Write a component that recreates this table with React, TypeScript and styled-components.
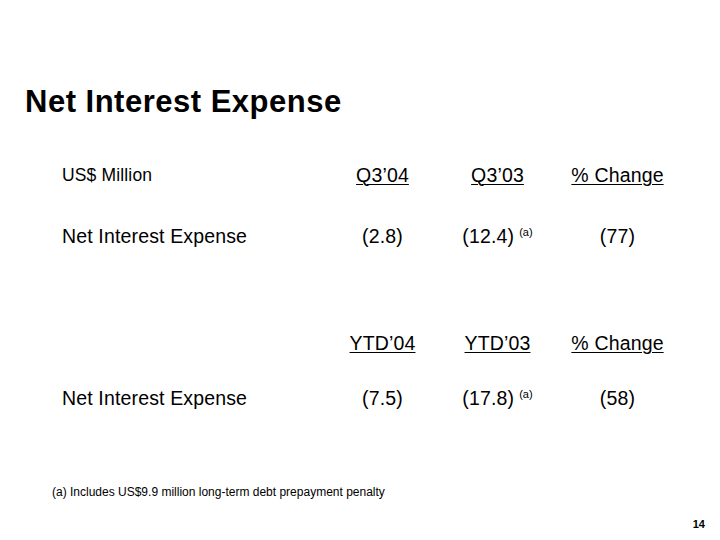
import React from "react";
import styled, { createGlobalStyle } from "styled-components";

const GlobalStyle = createGlobalStyle`
  html, body {
    margin: 0;
    padding: 0;
    background: #ffffff;
  }
  body {
    font-family: "Liberation Sans", Arial, sans-serif;
    color: #000000;
  }
`;

const Slide = styled.div`
  width: 720px;
  height: 540px;
  box-sizing: border-box;
  padding: 84px 0 0 0;
  display: flex;
  flex-direction: column;
  background: #ffffff;
  overflow: hidden;
`;

const Title = styled.h1`
  margin: 0 0 0 25px;
  font-size: 31px;
  line-height: 36px;
  font-weight: bold;
  letter-spacing: 0.5px;
`;

const Table = styled.div`
  margin-top: 35px;
  display: flex;
  flex-direction: column;
  padding-left: 62px;
`;

const Row = styled.div<{ $top: number }>`
  display: grid;
  grid-template-columns: 263px 115px 115px 125px;
  height: 40px;
  align-items: center;
  margin-top: ${(p) => p.$top}px;
  font-size: 19.5px;
  letter-spacing: 0.15px;
`;

const Label = styled.div<{ $small?: boolean }>`
  font-size: ${(p) => (p.$small ? "17.5px" : "19.5px")};
  white-space: nowrap;
`;

const Cell = styled.div`
  text-align: center;
  white-space: nowrap;
`;

const HeadCell = styled(Cell)`
  span {
    text-decoration: underline;
    text-underline-offset: 2px;
    text-decoration-thickness: 1px;
  }
`;

const Note = styled.sup`
  font-size: 11px;
  vertical-align: 7px;
  line-height: 0;
  margin-left: 5px;
  letter-spacing: 0;
`;

const Footnote = styled.div`
  margin: 66px 0 0 52px;
  font-size: 12px;
  line-height: 16px;
`;

const PageNum = styled.div`
  margin: 18px 0 0 0;
  padding-right: 15px;
  text-align: right;
  font-size: 11px;
  font-weight: bold;
`;

type Section = {
  top: number;
  heads: string[];
  label: string;
  values: { v: string; note?: string }[];
  dataTop: number;
  small?: string;
};

const sections: Section[] = [
  {
    top: 0,
    small: "US$ Million",
    heads: ["Q3\u201904", "Q3\u201903", "% Change"],
    label: "Net Interest Expense",
    values: [{ v: "(2.8)" }, { v: "(12.4)", note: "(a)" }, { v: "(77)" }],
    dataTop: 21,
  },
  {
    top: 67,
    heads: ["YTD\u201904", "YTD\u201903", "% Change"],
    label: "Net Interest Expense",
    values: [{ v: "(7.5)" }, { v: "(17.8)", note: "(a)" }, { v: "(58)" }],
    dataTop: 15,
  },
];

export default function App() {
  return (
    <>
      <GlobalStyle />
      <Slide>
        <Title>Net Interest Expense</Title>
        <Table>
          {sections.map((s, i) => (
            <React.Fragment key={i}>
              <Row $top={s.top}>
                <Label $small>{s.small}</Label>
                {s.heads.map((h) => (
                  <HeadCell key={h}>
                    <span>{h}</span>
                  </HeadCell>
                ))}
              </Row>
              <Row $top={s.dataTop}>
                <Label>{s.label}</Label>
                {s.values.map((c, j) => (
                  <Cell key={j}>
                    {c.v}
                    {c.note && <Note>{c.note}</Note>}
                  </Cell>
                ))}
              </Row>
            </React.Fragment>
          ))}
        </Table>
        <Footnote>(a) Includes US$9.9 million long-term debt prepayment penalty</Footnote>
        <PageNum>14</PageNum>
      </Slide>
    </>
  );
}
